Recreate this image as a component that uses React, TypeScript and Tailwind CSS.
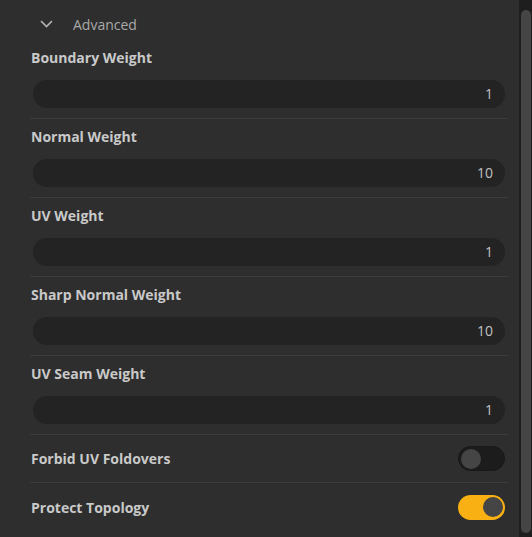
const numberFields = [
  { label: "Boundary Weight", value: "1" },
  { label: "Normal Weight", value: "10" },
  { label: "UV Weight", value: "1" },
  { label: "Sharp Normal Weight", value: "10" },
  { label: "UV Seam Weight", value: "1" },
];

const toggles = [
  { label: "Forbid UV Foldovers", on: false },
  { label: "Protect Topology", on: true },
];

function Toggle({ on }: { on: boolean }) {
  return (
    <div
      className={
        on
          ? "flex h-[25px] w-[47px] items-center justify-end rounded-full bg-[#f8b012] px-[2px]"
          : "flex h-[25px] w-[47px] items-center justify-start rounded-full border border-[#181818] bg-[#1c1c1c] px-[2px]"
      }
    >
      <div className="h-[20px] w-[20px] rounded-full bg-[#454545]" />
    </div>
  );
}

export default function App() {
  return (
    <div className="flex h-screen w-full bg-[#2e2e2e] font-['Open_Sans','Noto_Sans',sans-serif] text-[14px]">
      <div className="flex-1 pl-[30px] pr-[11px]">
        <div className="flex h-[48px] items-center pl-[10px]">
          <svg width="13" height="8" viewBox="0 0 13 8" fill="none" className="text-[#b4b4b4]">
            <polyline points="1,1 6.5,6.5 12,1" stroke="currentColor" strokeWidth="1.6" />
          </svg>
          <span className="ml-[20px] text-[#a9a9a9]">Advanced</span>
        </div>

        {numberFields.map((f, i) => (
          <div key={f.label} className={`border-b border-[#3c3c3c] pb-[10px] ${i === 0 ? "" : "pt-[8px]"}`}>
            <div className="h-[20px] leading-[20px] pl-[1px] font-bold text-[#c9c9c9]">{f.label}</div>
            <div className="mt-[12px] ml-[3px] mr-[3px] flex h-[28px] items-center justify-end rounded-full bg-[#232323] pr-[12px] pb-[1px] text-[#c2c2c2]">
              {f.value}
            </div>
          </div>
        ))}

        {toggles.map((t, i) => (
          <div
            key={t.label}
            className={`flex h-[48px] items-center justify-between pl-[1px] pr-[3px] ${i === 0 ? "border-b border-[#3c3c3c]" : ""}`}
          >
            <span className="font-bold text-[#c9c9c9]">{t.label}</span>
            <Toggle on={t.on} />
          </div>
        ))}
      </div>

      <div className="flex w-[13px] justify-center bg-[#1e1e1e] pt-[10px] pb-[4px]">
        <div className="w-[10px] rounded-full bg-[#454545]" />
      </div>
    </div>
  );
}
